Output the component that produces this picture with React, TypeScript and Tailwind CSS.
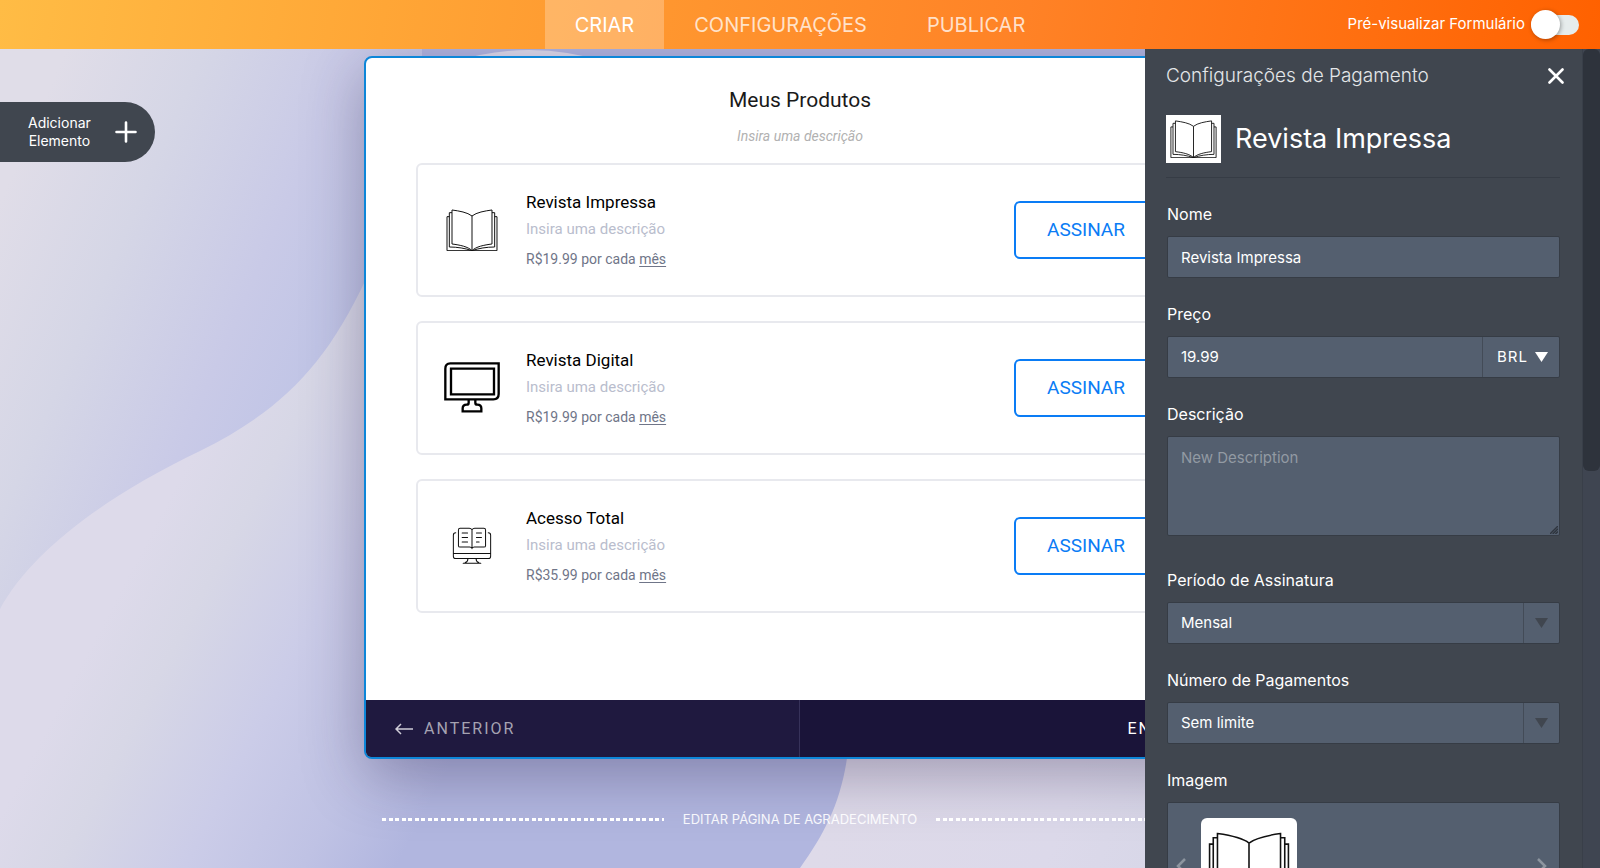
import { useState } from "react";

type Product = {
  id: string;
  name: string;
  price: string;
  icon: "book" | "monitor" | "reader";
};

const products: Product[] = [
  { id: "print", name: "Revista Impressa", price: "R$19.99", icon: "book" },
  { id: "digital", name: "Revista Digital", price: "R$19.99", icon: "monitor" },
  { id: "full", name: "Acesso Total", price: "R$35.99", icon: "reader" },
];

const tabs = ["CRIAR", "CONFIGURAÇÕES", "PUBLICAR"];

const fieldClass =
  "w-full rounded-xs border border-[#363c45] bg-[#545f6f] px-[13px] text-[15px] text-white outline-none";

function BookIcon({ className }: { className?: string }) {
  return (
    <svg viewBox="-2 -2 156 128" className={className} fill="none" stroke="#111" strokeWidth="3">
      <path d="M76 19C62 8 38 4 16 1v102c24 3 48 8 60 20 12-12 36-17 60-20V1c-22 3-46 7-60 18Zm0 0v104" />
      <path d="M16 9H8v103c24 0 48 4 68 11 20-7 44-11 68-11V9h-8" />
      <path d="M8 21H1v102h150V21h-7" />
    </svg>
  );
}

function MonitorIcon({ className }: { className?: string }) {
  return (
    <svg viewBox="0 0 168 154" className={className} fill="none" stroke="#000" strokeWidth="7">
      <path d="M19 4h145v92q0 16-16 16H4V20Q4 4 19 4Z" />
      <path d="M21 20h129v77H21Z" />
      <path d="M74 112v10q0 6-6 6-12 0-12 11v9h56v-9q0-11-12-11-6 0-6-6v-10" />
    </svg>
  );
}

function ReaderIcon({ className }: { className?: string }) {
  return (
    <svg
      viewBox="-2 -2 118 112"
      className={className}
      fill="none"
      stroke="#111"
      strokeWidth="3"
      strokeLinecap="round"
    >
      <path d="M9 15q-7 0-7 7v62q0 7 7 7h96q7 0 7-7V22q0-7-7-7M2 76h110" />
      <path d="M57 6q-3-4-8-4H22q-5 0-5 5v46q0 4 5 4h28q5 0 7 4 2-4 7-4h28q5 0 5-4V7q0-5-5-5H65q-5 0-8 4Zm0 0v54" />
      <path d="M28 16h16M28 29h16M28 42h16M70 16h15M70 29h15M70 42h8" />
      <path d="M45 91q0 10-8 12M69 91q0 10 8 12M31 105h52" />
    </svg>
  );
}

function ProductIcon({ icon }: { icon: Product["icon"] }) {
  if (icon === "book") return <BookIcon className="w-[52px]" />;
  if (icon === "monitor") return <MonitorIcon className="w-14" />;
  return <ReaderIcon className="w-10" />;
}

function Backdrop() {
  return (
    <svg
      className="absolute inset-0 h-full w-full"
      viewBox="0 0 1600 819"
      preserveAspectRatio="xMinYMin slice"
      aria-hidden="true"
    >
      <defs>
        <linearGradient id="upper" gradientUnits="userSpaceOnUse" x1="40" y1="60" x2="430" y2="230">
          <stop offset="0" stopColor="#e0dde8" />
          <stop offset="0.3" stopColor="#d5d6e6" />
          <stop offset="0.62" stopColor="#c9cae7" />
          <stop offset="0.82" stopColor="#c1c5e6" />
          <stop offset="1" stopColor="#bac0e3" />
        </linearGradient>
        <linearGradient id="lower" gradientUnits="userSpaceOnUse" x1="110" y1="560" x2="440" y2="735">
          <stop offset="0" stopColor="#dddaea" />
          <stop offset="0.2" stopColor="#d7d7e6" />
          <stop offset="0.5" stopColor="#cbcce8" />
          <stop offset="0.78" stopColor="#bfc2e4" />
          <stop offset="1" stopColor="#b1b6df" />
        </linearGradient>
        <linearGradient id="right" gradientUnits="userSpaceOnUse" x1="850" y1="700" x2="1200" y2="819">
          <stop offset="0" stopColor="#dedae9" />
          <stop offset="0.6" stopColor="#dcd9ea" />
          <stop offset="1" stopColor="#d6d6e7" />
        </linearGradient>
      </defs>
      <rect width="1600" height="819" fill="url(#upper)" />
      <path d="M422 0h1178v60H422Z" fill="#b0b4df" />
      <path d="M450 14Q528-12 610 14Z" fill="#dcd9ea" />
      <path
        d="M0 560C30 505 100 450 200 402C280 362 325 318 366 230V60H1600V819H0Z"
        fill="url(#lower)"
      />
      <path d="M800 819C835 770 852 730 851 640H1600V819Z" fill="url(#right)" />
    </svg>
  );
}

function Header() {
  const [active, setActive] = useState("CRIAR");
  const [preview, setPreview] = useState(false);

  return (
    <header className="relative z-20 grid h-[49px] shrink-0 grid-cols-[1fr_auto_1fr] bg-[linear-gradient(100deg,#ffbc45_0%,#ffa636_24%,#ff8226_64%,#ff6100_100%)]">
      <nav className="col-start-2 flex">
        {tabs.map((tab) => (
          <button
            key={tab}
            type="button"
            onClick={() => setActive(tab)}
            className={`px-[30px] text-[20px] ${
              active === tab ? "bg-white/25 text-white" : "text-white/75"
            }`}
          >
            {tab}
          </button>
        ))}
      </nav>
      <label className="flex items-center justify-end gap-1.5 pr-[21px] text-[15px] text-white">
        Pré-visualizar Formulário
        <input
          type="checkbox"
          checked={preview}
          onChange={(e) => setPreview(e.target.checked)}
          className="flex h-5 w-12 appearance-none items-center rounded-full bg-[#e6ecec] before:size-[29px] before:shrink-0 before:rounded-full before:bg-white before:shadow-[1px_1px_4px_rgba(0,0,0,0.35)] checked:justify-end"
        />
      </label>
    </header>
  );
}

function ProductCard({ product }: { product: Product }) {
  return (
    <li className="flex h-[134px] items-center gap-6 rounded-md border-2 border-[#e8e9ee] px-6">
      <div className="flex w-[60px] justify-center">
        <ProductIcon icon={product.icon} />
      </div>
      <div className="flex-1">
        <h3 className="text-[17px] leading-7 text-black">{product.name}</h3>
        <p className="text-[15px] leading-[26px] text-[#b9bdcd]">Insira uma descrição</p>
        <p className="mt-1 text-[14px] leading-[26px] text-[#6f7588]">
          {product.price} por cada{" "}
          <a href="#periodo" className="underline underline-offset-2">
            mês
          </a>
        </p>
      </div>
      <button
        type="button"
        className="h-[58px] w-[144px] rounded-md border-2 border-[#0a7cf5] text-[19px] text-[#0a7cf5]"
      >
        ASSINAR
      </button>
    </li>
  );
}

function FormCard() {
  return (
    <section className="w-full max-w-[872px] overflow-hidden rounded-lg border-2 border-[#0d86d8] bg-white font-[Roboto,sans-serif] shadow-[0_16px_60px_rgba(40,30,70,0.34)]">
      <div className="px-[50px] pt-6 pb-[87px]">
        <h2 className="text-center text-[21px] leading-9 text-[#1a1a1a]">Meus Produtos</h2>
        <p className="mt-2 text-center text-[14px] leading-5 text-[#b1b1b1] italic">
          Insira uma descrição
        </p>
        <ul className="mt-[17px] flex flex-col gap-6">
          {products.map((product) => (
            <ProductCard key={product.id} product={product} />
          ))}
        </ul>
      </div>
      <div className="grid h-[57px] grid-cols-2 bg-[#1a1439] text-[16px] tracking-[2px]">
        <button
          type="button"
          className="flex items-center gap-[11px] border-r border-[#37325a] bg-[#1f193f] pl-[29px] text-[#a5a3b2]"
        >
          <svg viewBox="0 0 18 12" className="h-3 w-[18px]" fill="none" stroke="#cfcdd8" strokeWidth="1.5">
            <path d="M18 6H1M6 1L1 6l5 5" />
          </svg>
          ANTERIOR
        </button>
        <button type="button" className="pr-[39px] text-right text-white">
          ENVIAR
        </button>
      </div>
    </section>
  );
}

function DashedRule() {
  return (
    <span className="h-[3px] flex-1 bg-[repeating-linear-gradient(90deg,#fff_0_4px,transparent_4px_7px,#fff_7px_11px,transparent_11px_13px)]" />
  );
}

function Triangle({ className }: { className?: string }) {
  return (
    <svg viewBox="0 0 13 10" className={className}>
      <path d="M0 0h13L6.5 10Z" fill="currentColor" />
    </svg>
  );
}

function SelectField({ id, label, options }: { id: string; label: string; options: string[] }) {
  return (
    <div className="mb-6">
      <label htmlFor={id} className="mb-2.5 block leading-6">
        {label}
      </label>
      <div className="relative">
        <select id={id} className={`${fieldClass} h-[42px] appearance-none`}>
          {options.map((option) => (
            <option key={option}>{option}</option>
          ))}
        </select>
        <span className="pointer-events-none absolute inset-y-px right-px flex w-9 items-center justify-center border-l border-[#434b57] text-[#40464f]">
          <Triangle className="h-2.5 w-[13px]" />
        </span>
      </div>
    </div>
  );
}

function SettingsPanel() {
  const [name, setName] = useState("Revista Impressa");
  const [price, setPrice] = useState("19.99");

  return (
    <aside className="absolute inset-y-0 right-0 z-10 flex w-[455px] bg-[#40464f] text-[16px] text-white">
      <div className="flex-1 overflow-hidden pr-[22px] pl-[21px]">
        <div className="flex h-[54px] items-center justify-between">
          <h2 className="text-[19px] font-light text-[#e4e6e9]">Configurações de Pagamento</h2>
          <button type="button" aria-label="Fechar" className="-mr-1">
            <svg viewBox="0 0 16 16" className="size-4" stroke="#fff" strokeWidth="2.6" strokeLinecap="round">
              <path d="M1.5 1.5l13 13M14.5 1.5l-13 13" />
            </svg>
          </button>
        </div>
        <div className="flex items-center gap-3.5 border-b border-[#363c45] pt-3 pb-3.5">
          <div className="flex h-12 w-[55px] items-center justify-center bg-white">
            <BookIcon className="w-[47px]" />
          </div>
          <h3 className="text-[27px] leading-[48px]">{name}</h3>
        </div>

        <div className="pt-6 pl-px">
          <div className="mb-6">
            <label htmlFor="nome" className="mb-2.5 block leading-6">
              Nome
            </label>
            <input
              id="nome"
              value={name}
              onChange={(e) => setName(e.target.value)}
              className={`${fieldClass} h-[42px]`}
            />
          </div>

          <div className="mb-6">
            <label htmlFor="preco" className="mb-2.5 block leading-6">
              Preço
            </label>
            <div className="flex h-[42px] rounded-xs border border-[#363c45] bg-[#545f6f]">
              <input
                id="preco"
                value={price}
                onChange={(e) => setPrice(e.target.value)}
                className="min-w-0 flex-1 bg-transparent px-[13px] text-[15px] outline-none"
              />
              <div className="relative w-[77px] border-l border-[#434b57]">
                <select
                  aria-label="Moeda"
                  className="h-full w-full appearance-none bg-transparent pl-3.5 text-[15px] tracking-[1px] outline-none"
                >
                  <option>BRL</option>
                  <option>USD</option>
                  <option>EUR</option>
                </select>
                <span className="pointer-events-none absolute inset-y-0 right-[11px] flex items-center">
                  <Triangle className="h-2.5 w-[13px]" />
                </span>
              </div>
            </div>
          </div>

          <div className="mb-8">
            <label htmlFor="descricao" className="mb-2.5 block leading-6">
              Descrição
            </label>
            <div className="relative">
              <textarea
                id="descricao"
                placeholder="New Description"
                className={`${fieldClass} block h-[100px] resize-none py-2.5 placeholder:text-[#929aa3]`}
              />
              <svg viewBox="0 0 8 8" className="absolute right-0.5 bottom-0.5 size-2" stroke="#2f353e" strokeWidth="1.4">
                <path d="M0 8L8 0M2.7 8L8 2.7M5.4 8L8 5.4" />
              </svg>
            </div>
          </div>

          <SelectField id="periodo" label="Período de Assinatura" options={["Mensal", "Anual"]} />
          <SelectField id="pagamentos" label="Número de Pagamentos" options={["Sem limite", "12"]} />

          <h4 className="mb-2.5 leading-6">Imagem</h4>
          <div className="flex h-32 items-center rounded-xs border border-[#363c45] bg-[#545f6f] px-2">
            <button type="button" aria-label="Imagem anterior">
              <svg viewBox="0 0 10 16" className="h-4 w-2.5" fill="none" stroke="#8d959f" strokeWidth="2.5">
                <path d="M9 1L2 8l7 7" />
              </svg>
            </button>
            <div className="ml-[15px] flex size-24 items-center justify-center rounded-md bg-white">
              <BookIcon className="w-[82px]" />
            </div>
            <button type="button" aria-label="Próxima imagem" className="mr-1 ml-auto">
              <svg viewBox="0 0 10 16" className="h-4 w-2.5" fill="none" stroke="#8d959f" strokeWidth="2.5">
                <path d="M1 1l7 7-7 7" />
              </svg>
            </button>
          </div>
        </div>
      </div>
      <div className="w-[18px] border-l border-[#393f49] bg-[#3f4551]">
        <div className="h-[422px] rounded-md bg-[#2e333c]" />
      </div>
    </aside>
  );
}

export default function App() {
  return (
    <div className="flex h-screen flex-col overflow-hidden font-[Inter,sans-serif]">
      <Header />
      <main className="relative flex-1 overflow-hidden">
        <Backdrop />
        <button
          type="button"
          className="absolute top-[53px] left-0 z-10 flex h-[60px] items-center gap-6 rounded-r-full bg-[#40464f] pr-[18px] pl-7 text-[14px] leading-[18px] text-white"
        >
          <span className="text-center">
            Adicionar
            <br />
            Elemento
          </span>
          <svg viewBox="0 0 22 22" className="size-[22px]" stroke="#fff" strokeWidth="2.6" strokeLinecap="round">
            <path d="M11 1.5v19M1.5 11h19" />
          </svg>
        </button>
        <div className="relative flex flex-col items-center pt-[7px]">
          <FormCard />
          <div className="mt-[49px] flex w-full max-w-[836px] items-center gap-[19px]">
            <DashedRule />
            <a href="#agradecimento" className="text-[13px] leading-[22px] text-white/90">
              EDITAR PÁGINA DE AGRADECIMENTO
            </a>
            <DashedRule />
          </div>
        </div>
        <SettingsPanel />
      </main>
    </div>
  );
}
